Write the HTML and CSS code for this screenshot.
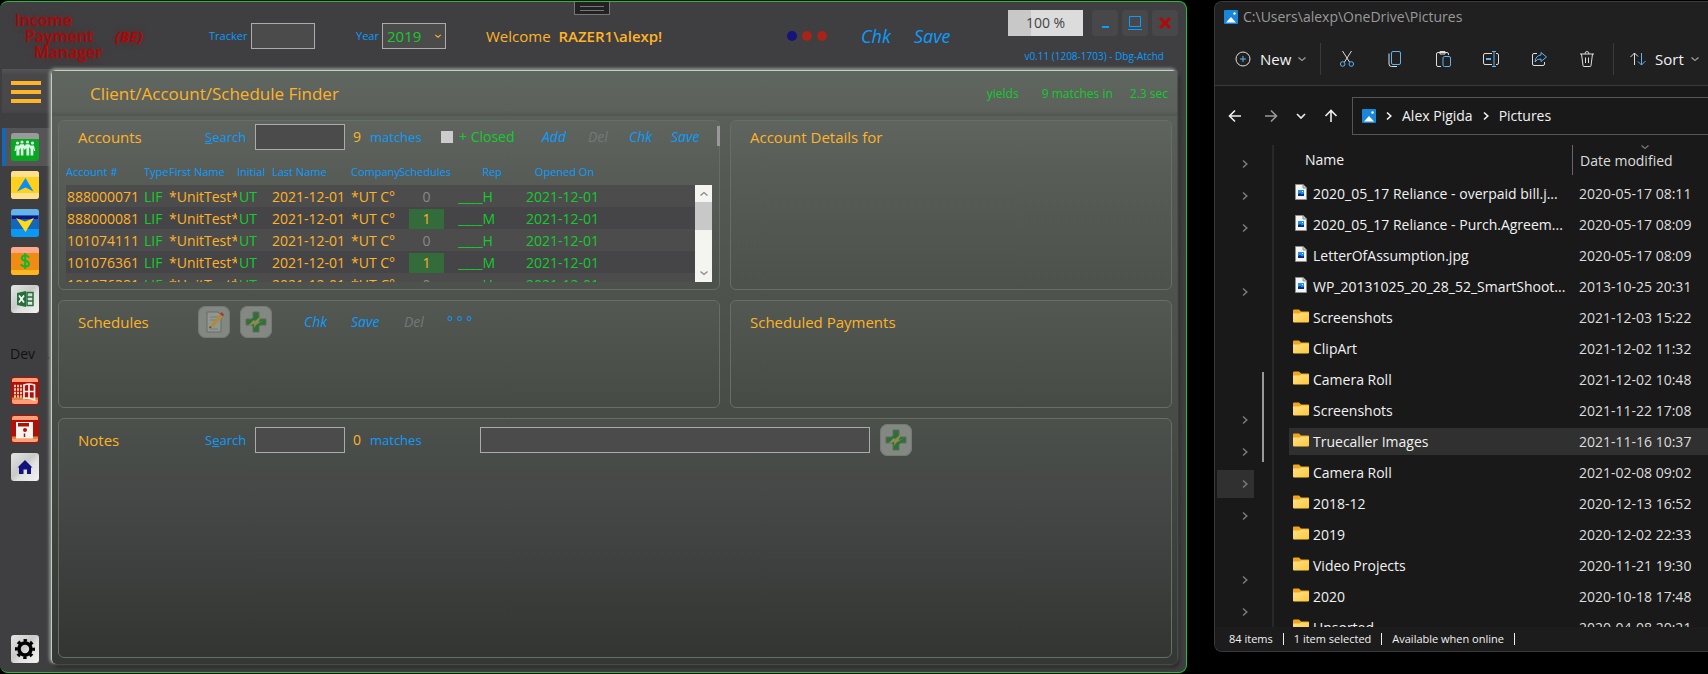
FILE: index.html
```html
<!DOCTYPE html>
<html lang="en">
<head>
<meta charset="utf-8">
<title>Income Payment Manager</title>
<link rel="stylesheet" href="styles.css">
</head>
<body>
<svg class="defs" aria-hidden="true">
  <defs>
    <linearGradient id="gFolder" x1="0" y1="0" x2="1" y2="1"><stop offset="0" stop-color="#ffe08a"/><stop offset="1" stop-color="#fdc93a"/></linearGradient>
    <linearGradient id="gSilver" x1="0" y1="0" x2="1" y2="1"><stop offset="0" stop-color="#e4e6e4"/><stop offset=".45" stop-color="#c9cbc9"/><stop offset=".6" stop-color="#e0e2e0"/><stop offset="1" stop-color="#f2f2f0"/></linearGradient>
  </defs>
  <symbol id="folder" viewBox="0 0 16 14"><path d="M0 1.500Q0 .5 1 .5H6L8 2.500H15.500Q16 2.500 16 3.500V6H0Z" fill="#f0a51e"/><path d="M0 4.500H6.500L8 3.500H16V12.500Q16 13.500 15 13.500H1Q0 13.500 0 12.500Z" fill="url(#gFolder)"/></symbol>
  <symbol id="file" viewBox="0 0 16 16"><path d="M2.500.5H10L13.500 4V15.500H2.500Z" fill="#f4f4f2" stroke="#8d8d8d"/><path d="M10 .5V4H13.500" fill="#ccc" stroke="#8d8d8d"/><rect x="5" y="6" width="6" height="6" fill="#1b8fe8"/><path d="M5 12V10L7 9L9 10.500L11 9.500V12Z" fill="#0b2a75"/><rect x="9" y="7" width="1" height="1" fill="#fff"/></symbol>
  <symbol id="pics" viewBox="0 0 14 14"><rect width="14" height="14" rx="1" fill="#1a86d9"/><path d="M2 12.500L7 7L12 12.500Z" fill="#fff"/><circle cx="10.500" cy="3.500" r="1.200" fill="#fff"/></symbol>
  <symbol id="right" viewBox="0 0 10 10"><path d="M3 1.500L6.800 5L3 8.500" fill="none" stroke="currentColor" stroke-width="1.600"/></symbol>
  <symbol id="down" viewBox="0 0 10 10"><path d="M1.500 3.500L5 6.500L8.500 3.500" fill="none" stroke="currentColor" stroke-width="1.300"/></symbol>
  <symbol id="plus" viewBox="0 0 32 32"><path d="M13 6H19V11.500L20.500 13H26V19H20.500L19 20.500V26H13V20.500L11.500 19H6V13H11.500L13 11.500Z" fill="#2e7136" stroke="#626862"/><path d="M8 20L13.500 14L15 15L22 9L18.500 16.500L24 14L16 19L14.500 22L14 18Z" fill="#8a8a55"/></symbol>
</svg>

<main class="desktop">
  <section class="ipm" aria-label="Income Payment Manager">
    <div class="grip"></div>
    <header class="ipm-head">
      <div class="logo"><span>Income</span><span>Payment</span><span>Manager</span></div>
      <b class="env">(BE)</b>
      <label class="small" for="tracker">Tracker</label>
      <input class="box" id="tracker" type="text">
      <label class="small" for="year">Year</label>
      <div class="year"><select id="year" class="box"><option>2019</option></select><svg class="ic10"><use href="#down"/></svg></div>
      <div class="welcome">Welcome <b>RAZER1\alexp!</b></div>
      <div class="dots"><i class="navy"></i><i></i><i></i></div>
      <button class="cmd big">Chk</button>
      <button class="cmd big">Save</button>
      <div class="head-right">
        <div class="caption">
          <div class="zoom">100 %</div>
          <button class="cap" aria-label="Minimize"><svg viewBox="0 0 26 26"><path d="M10 17H17" stroke="#0a9cff" stroke-width="2"/></svg></button>
          <button class="cap" aria-label="Maximize"><svg viewBox="0 0 26 26"><path d="M7.500 6.500H18.500V16.500H7.500ZM6 19.500H20" fill="none" stroke="#0a9cff"/></svg></button>
          <button class="cap" aria-label="Close"><svg viewBox="0 0 26 26"><path d="M8 8L18 18M18 8L8 18" stroke="#b30808" stroke-width="3"/></svg></button>
        </div>
        <div class="version">v0.11 (1208-1703) - Dbg-Atchd</div>
      </div>
    </header>

    <nav class="rail">
      <button class="burger" aria-label="Menu"><i></i><i></i><i></i></button>
      <button class="item on" aria-label="Clients"><svg viewBox="0 0 28 28"><rect width="28" height="28" rx="3" fill="#07a81f"/><path d="M0 6V3Q0 0 3 0H25Q28 0 28 3V6Z" fill="#9a9a9a"/><g fill="#d8f5e6"><circle cx="6.500" cy="10" r="1.600"/><circle cx="11" cy="9" r="1.600"/><circle cx="16.500" cy="9" r="1.600"/><circle cx="21.500" cy="10" r="1.600"/><path d="M4.500 12.500H8.500L9.200 11.200H12.800L13.800 13L14.800 11.200H18.300L19.300 12.500H23L24.200 18H23L22.300 15V22.500H20.800V17.500V22.500H19.600V16L18.200 14V22.500H16.800V17V22.500H15.400V15L13.800 17L12.400 15V22.500H11.200V17V22.500H9.800V15L8.400 17V22.500H7V18V22.500H5.400V16L4.600 18H3.400Z"/></g></svg></button>
      <button class="item" aria-label="Up"><svg viewBox="0 0 28 28"><rect width="28" height="28" rx="3" fill="#ffd01c"/><path d="M0 6V3Q0 0 3 0H25Q28 0 28 3V6ZM0 22H28V25Q28 28 25 28H3Q0 28 0 25Z" fill="#ffe08c"/><path d="M14.500 7L22.500 20.500L14.500 16.500L6 20.500Z" fill="#0b8ef0"/></svg></button>
      <button class="item" aria-label="Down"><svg viewBox="0 0 28 28"><rect width="28" height="28" rx="3" fill="#1565b8"/><path d="M0 6V3Q0 0 3 0H25Q28 0 28 3V6Z" fill="#66b3e8"/><path d="M1 7H27V10H1Z" fill="#14147c"/><path d="M0 20H28V25Q28 28 25 28H3Q0 28 0 25Z" fill="#0b98f2"/><path d="M5 9L14 12.500L23 9L14.500 23Z" fill="#ffd91c"/></svg></button>
      <button class="item" aria-label="Money"><svg viewBox="0 0 28 28"><rect width="28" height="28" rx="3" fill="#f08c14"/><path d="M0 6V3Q0 0 3 0H25Q28 0 28 3V6Z" fill="#ffa98a"/><path d="M0 23H28V25Q28 28 25 28H3Q0 28 0 25Z" fill="#ffb71c"/><path d="M18 10.500Q17 8.500 14.200 8.500Q10.800 8.500 10.800 11Q10.800 13.200 14.200 13.700Q18 14.300 18 17Q18 19.500 14.200 19.500Q11 19.500 10 17.200M14.200 6V22" fill="none" stroke="#12b82b" stroke-width="2"/></svg></button>
      <button class="item" aria-label="Excel"><svg viewBox="0 0 28 28"><rect width="28" height="28" rx="3" fill="url(#gSilver)"/><path d="M6 8L15 6V22L6 20Z" fill="#25703a"/><path d="M16 7.500H22V20.500H16ZM16 12H22M16 16H22" fill="none" stroke="#25703a" stroke-width="1.500"/><path d="M8 10.500L13 17.500M13 10.500L8 17.500" stroke="#fff" stroke-width="1.700"/></svg></button>
      <div class="dev"><span>Dev</span><span class="dot">.</span></div>
      <button class="item" aria-label="Window"><svg viewBox="0 0 28 28"><rect width="28" height="28" rx="3" fill="#b01008"/><path d="M1 5V3Q1 1 3 1H25Q27 1 27 3V5ZM1 23H27V25Q27 27 25 27H3Q1 27 1 25Z" fill="#ff9d75"/><path d="M1 20.500H27V23H1Z" fill="#d98a3c"/><path d="M3 9H13M3 12.500H13M3 16H13M3 19.500H13" stroke="#e8c8a8" stroke-width="2.500" stroke-dasharray="2 1"/><path d="M13 8Q18 6 23.500 8V23Q18 20.500 13 21.500ZM18 7V21M13 14.500H23" fill="none" stroke="#eee" stroke-width="1.700"/></svg></button>
      <button class="item" aria-label="Disk"><svg viewBox="0 0 28 28"><rect width="28" height="28" rx="3" fill="#b01008"/><path d="M1 5V3Q1 1 3 1H25Q27 1 27 3V5ZM1 24H27V25Q27 27 25 27H3Q1 27 1 25Z" fill="#ff9d75"/><path d="M1 21.500H27V24H1Z" fill="#d98a3c"/><path d="M5 7H22V23.500H5Z" fill="#f6f6ee"/><path d="M7 8H18V11.500H7Z" fill="#b01008"/><circle cx="14" cy="15" r="2" fill="#b01008"/><path d="M13.500 18.500V22" stroke="#b01008" stroke-width="1.500"/></svg></button>
      <button class="item" aria-label="Home"><svg viewBox="0 0 28 28"><rect width="28" height="28" rx="3" fill="url(#gSilver)"/><path d="M14 7L21.500 14.500H20V21H16V16.500H12.500V21H8V14.500H6.500Z" fill="#12127f"/></svg></button>
      <button class="item last" aria-label="Settings"><svg viewBox="0 0 28 28"><rect width="28" height="28" rx="3" fill="url(#gSilver)"/><circle cx="14" cy="14" r="6" fill="none" stroke="#000" stroke-width="3.600"/><circle cx="14" cy="14" r="8.600" fill="none" stroke="#000" stroke-width="2.800" stroke-dasharray="3.400 3.354" stroke-dashoffset="1.700"/></svg></button>
    </nav>

    <div class="page">
      <header class="page-head">
        <h1>Client/Account/Schedule Finder</h1>
        <div class="yield"><span>yields</span><span>9 matches in</span><span>2.3 sec</span></div>
      </header>
      <div class="cards">
        <section class="card">
          <i class="thumb"></i>
          <div class="bar accounts">
            <h2>Accounts</h2>
            <label for="accSearch"><u>S</u>earch</label>
            <input class="box" id="accSearch" type="text">
            <span class="num">9</span><span>matches</span>
            <input class="check" type="checkbox" id="closed"><label class="green closed" for="closed">+ Closed</label>
            <button class="cmd">Add</button><button class="cmd" disabled>Del</button><button class="cmd">Chk</button><button class="cmd">Save</button>
          </div>
          <div class="grid-area">
            <div class="scroll">
              <table>
                <colgroup><col class="c1"><col class="c2"><col class="c3"><col class="c4"><col class="c5"><col class="c6"><col class="c7"><col class="c8"><col class="c9"><col></colgroup>
                <thead><tr><th>Account #</th><th>Type</th><th>First Name</th><th>Initial</th><th>Last Name</th><th>Company</th><th>Schedules</th><th class="mid">Rep</th><th class="mid">Opened On</th><th></th></tr></thead>
                <tbody>
                  <tr><td>888000071</td><td class="green">LIF</td><td>*UnitTest*</td><td class="green">UT</td><td>2021-12-01</td><td>*UT C°</td><td><span class="cnt">0</span></td><td class="green">____H</td><td class="green">2021-12-01</td><td></td></tr>
                  <tr><td>888000081</td><td class="green">LIF</td><td>*UnitTest*</td><td class="green">UT</td><td>2021-12-01</td><td>*UT C°</td><td><span class="cnt one">1</span></td><td class="green">____M</td><td class="green">2021-12-01</td><td></td></tr>
                  <tr><td>101074111</td><td class="green">LIF</td><td>*UnitTest*</td><td class="green">UT</td><td>2021-12-01</td><td>*UT C°</td><td><span class="cnt">0</span></td><td class="green">____H</td><td class="green">2021-12-01</td><td></td></tr>
                  <tr><td>101076361</td><td class="green">LIF</td><td>*UnitTest*</td><td class="green">UT</td><td>2021-12-01</td><td>*UT C°</td><td><span class="cnt one">1</span></td><td class="green">____M</td><td class="green">2021-12-01</td><td></td></tr>
                  <tr><td>101076381</td><td class="green">LIF</td><td>*UnitTest*</td><td class="green">UT</td><td>2021-12-01</td><td>*UT C°</td><td><span class="cnt">0</span></td><td class="green">____H</td><td class="green">2021-12-01</td><td></td></tr>
                </tbody>
              </table>
            </div>
            <div class="sbar"><svg class="ic10 up"><use href="#down"/></svg><i></i><svg class="ic10"><use href="#down"/></svg></div>
          </div>
        </section>
        <section class="card"><div class="bar side"><h2>Account Details for</h2></div></section>

        <section class="card">
          <div class="bar schedules">
            <h2>Schedules</h2>
            <button class="tile" aria-label="Edit schedule"><svg viewBox="0 0 32 32"><path d="M9 6H20L23 9V26H9Z" fill="#92978f" stroke="#686d68"/><path d="M12 11H20M12 14H20M12 23H20" stroke="#777c77"/><path d="M12 20L22 8L25 10.500L15 21L11 22.500Z" fill="#b28a3e"/><path d="M22 8L23.500 6L26 8.500L25 10.500Z" fill="#a03a34"/><path d="M11 22.500L12 20L13.500 21.500Z" fill="#444"/></svg></button>
            <button class="tile" aria-label="Add schedule"><svg viewBox="0 0 32 32"><use href="#plus"/></svg></button>
            <button class="cmd">Chk</button><button class="cmd">Save</button><button class="cmd" disabled>Del</button><button class="cmd">° ° °</button>
          </div>
        </section>
        <section class="card"><div class="bar side tall"><h2>Scheduled Payments</h2></div></section>

        <section class="card wide">
          <div class="bar notes">
            <h2>Notes</h2>
            <label for="noteSearch">S<u>e</u>arch</label>
            <input class="box" id="noteSearch" type="text">
            <span class="num">0</span><span>matches</span>
            <input class="box" type="text" aria-label="New note">
            <button class="tile" aria-label="Add note"><svg viewBox="0 0 32 32"><use href="#plus"/></svg></button>
          </div>
        </section>
      </div>
    </div>
  </section>

  <section class="explorer" aria-label="Pictures">
    <header class="ex-title"><svg class="ic14"><use href="#pics"/></svg><span>C:\Users\alexp\OneDrive\Pictures</span></header>
    <div class="ex-tools">
      <button class="tool new"><svg viewBox="0 0 16 16"><circle cx="8" cy="8" r="7" class="w"/><path d="M8 5V11M5 8H11" class="b"/></svg><span>New</span><svg class="ic10"><use href="#down"/></svg></button>
      <button class="tool" aria-label="Cut"><svg viewBox="0 0 16 16"><path d="M3.500 0L10.500 11M12.500 0L5.500 11" class="w"/><circle cx="3.700" cy="13" r="2.300" class="b"/><circle cx="12.300" cy="13" r="2.300" class="b"/></svg></button>
      <button class="tool" aria-label="Copy"><svg viewBox="0 0 16 16"><path d="M2 2.500V13Q2 15.500 4.500 15.500H10" class="w"/><rect x="4.500" y=".5" width="9" height="13" rx="1.500" class="b"/></svg></button>
      <button class="tool" aria-label="Paste"><svg viewBox="0 0 16 16"><path d="M6 15.500H3Q1.500 15.500 1.500 14V3Q1.500 1.500 3 1.500H12Q13.500 1.500 13.500 3V4M5 .5H10V3H5Z" class="w"/><rect x="8" y="5.500" width="7.500" height="10" rx="1.500" class="b"/></svg></button>
      <button class="tool" aria-label="Rename"><svg viewBox="0 0 16 16"><path d="M9 2.500H2Q.5 2.500 .5 4V12Q.5 13.500 2 13.500H9M13 2.500H14Q15.500 2.500 15.500 4V12Q15.500 13.500 14 13.500H13" class="w"/><path d="M11 .5V15.500M9 .5H13M9 15.500H13" class="b"/><path d="M3 8H8" class="b thick"/></svg></button>
      <button class="tool" aria-label="Share"><svg viewBox="0 0 16 16"><path d="M6 2.500H3Q1.500 2.500 1.500 4V13Q1.500 14.500 3 14.500H12Q13.500 14.500 13.500 13V11" class="w"/><path d="M10 1.500L15.500 6L10 10.500V8Q6 7.500 4 11Q4.500 4.500 10 4Z" class="b"/></svg></button>
      <button class="tool" aria-label="Delete"><svg viewBox="0 0 16 16"><path d="M1 3H15M2.500 3L4 14.500Q4 15.500 5 15.500H11Q12 15.500 12 14.500L13.500 3M6 3Q6 .5 8 .5Q10 .5 10 3M6.500 6.500V12M9.500 6.500V12" class="w"/></svg></button>
      <button class="tool sort"><svg viewBox="0 0 16 16"><path d="M4.500 14V2M.5 6L4.500 2L8 5.500" class="w"/><path d="M11.500 2V14M8 10.500L11.500 14L15.500 10" class="b"/></svg><span>Sort</span><svg class="ic10"><use href="#down"/></svg></button>
    </div>
    <div class="ex-nav">
      <button aria-label="Back"><svg viewBox="0 0 14 14"><path d="M13 7H1.500M7 1.500L1.500 7L7 12.500"/></svg></button>
      <button class="dim" aria-label="Forward"><svg viewBox="0 0 14 14"><path d="M1 7H12.500M7 1.500L12.500 7L7 12.500"/></svg></button>
      <button aria-label="Recent"><svg viewBox="0 0 14 14"><path d="M3 5L7 9L11 5"/></svg></button>
      <button aria-label="Up"><svg viewBox="0 0 14 14"><path d="M7 13V1.500M1.500 7L7 1.500L12.500 7"/></svg></button>
      <div class="path"><svg class="ic14"><use href="#pics"/></svg><svg class="ic10"><use href="#right"/></svg><a href="#">Alex Pigida</a><svg class="ic10"><use href="#right"/></svg><a href="#">Pictures</a></div>
    </div>
    <div class="ex-body">
      <div class="tree">
        <i><svg class="ic10"><use href="#right"/></svg></i><i><svg class="ic10"><use href="#right"/></svg></i><i><svg class="ic10"><use href="#right"/></svg></i><i></i>
        <i><svg class="ic10"><use href="#right"/></svg></i><i></i><i></i><i></i>
        <i><svg class="ic10"><use href="#right"/></svg></i><i><svg class="ic10"><use href="#right"/></svg></i><i class="sel"><svg class="ic10"><use href="#right"/></svg></i><i><svg class="ic10"><use href="#right"/></svg></i><i></i>
        <i><svg class="ic10"><use href="#right"/></svg></i><i><svg class="ic10"><use href="#right"/></svg></i>
      </div>
      <div class="tree-bar"><i></i></div>
      <div class="files">
        <div class="frow fhead"><span>Name</span><span class="date">Date modified<svg class="ic10 mark"><use href="#down"/></svg></span></div>
        <div class="frow"><svg class="ic16"><use href="#file"/></svg><span>2020_05_17 Reliance - overpaid bill.j...</span><span class="date">2020-05-17 08:11</span></div>
        <div class="frow"><svg class="ic16"><use href="#file"/></svg><span>2020_05_17 Reliance - Purch.Agreem...</span><span class="date">2020-05-17 08:09</span></div>
        <div class="frow"><svg class="ic16"><use href="#file"/></svg><span>LetterOfAssumption.jpg</span><span class="date">2020-05-17 08:09</span></div>
        <div class="frow"><svg class="ic16"><use href="#file"/></svg><span>WP_20131025_20_28_52_SmartShoot...</span><span class="date">2013-10-25 20:31</span></div>
        <div class="frow"><svg class="ic16"><use href="#folder"/></svg><span>Screenshots</span><span class="date">2021-12-03 15:22</span></div>
        <div class="frow"><svg class="ic16"><use href="#folder"/></svg><span>ClipArt</span><span class="date">2021-12-02 11:32</span></div>
        <div class="frow"><svg class="ic16"><use href="#folder"/></svg><span>Camera Roll</span><span class="date">2021-12-02 10:48</span></div>
        <div class="frow"><svg class="ic16"><use href="#folder"/></svg><span>Screenshots</span><span class="date">2021-11-22 17:08</span></div>
        <div class="frow sel"><svg class="ic16"><use href="#folder"/></svg><span>Truecaller Images</span><span class="date">2021-11-16 10:37</span></div>
        <div class="frow"><svg class="ic16"><use href="#folder"/></svg><span>Camera Roll</span><span class="date">2021-02-08 09:02</span></div>
        <div class="frow"><svg class="ic16"><use href="#folder"/></svg><span>2018-12</span><span class="date">2020-12-13 16:52</span></div>
        <div class="frow"><svg class="ic16"><use href="#folder"/></svg><span>2019</span><span class="date">2020-12-02 22:33</span></div>
        <div class="frow"><svg class="ic16"><use href="#folder"/></svg><span>Video Projects</span><span class="date">2020-11-21 19:30</span></div>
        <div class="frow"><svg class="ic16"><use href="#folder"/></svg><span>2020</span><span class="date">2020-10-18 17:48</span></div>
        <div class="frow"><svg class="ic16"><use href="#folder"/></svg><span>Unsorted</span><span class="date">2020-04-08 20:21</span></div>
      </div>
    </div>
    <footer class="ex-foot"><span>84 items</span><span>1 item selected</span><span>Available when online</span></footer>
  </section>
</main>
</body>
</html>
```

FILE: styles.css
```css
* { box-sizing: border-box; }
html, body { height: 100%; }
body { margin: 0; background: #000; font: 14px/20px "Open Sans", "Noto Sans", sans-serif; overflow: hidden; }
h1, h2 { margin: 0; font-weight: 400; }
button { padding: 0; border: 0; background: none; font: inherit; color: inherit; text-align: left; white-space: nowrap; }
a { color: inherit; text-decoration: none; }
svg { display: block; flex: none; }
.defs { position: absolute; width: 0; height: 0; }
.ic10 { width: 10px; height: 10px; }
.ic14 { width: 14px; height: 14px; }
.ic16 { width: 16px; height: 16px; }
.green { color: #12cc2b; }

.desktop { display: grid; grid-template-columns: minmax(0, 1187fr) minmax(0, 494fr); gap: 27px; height: 100%; padding-top: 1px; }

/* Payment manager window */
.ipm { position: relative; display: grid; grid-template: 67px minmax(0, 1fr) / 51px minmax(0, 1fr); margin-bottom: 1px; border: 1px solid #17c42e; border-left: 0; border-radius: 8px; background: #3f3f41; color: #0a9cff; overflow: hidden; }
.grip { position: absolute; left: 574px; top: 0; width: 36px; height: 13px; background: #222; border: 1px solid #777; border-top: 0; }
.grip::after { content: ""; display: block; width: 24px; height: 3px; margin: 4px auto; border: solid #777; border-width: 1px 0; }
.ipm-head { grid-column: 1 / -1; display: grid; grid-template-columns: 100px 94px 42px 105px 26px 104px 301px 74px 53px 60px minmax(0, 1fr); align-items: center; padding-left: 15px; }
.logo { display: grid; color: #a90808; font-size: 16px; line-height: 16px; font-weight: 600; text-shadow: 0 0 6px rgba(170, 10, 10, .5); }
.logo span:nth-child(2) { padding-left: 10px; }
.logo span:nth-child(3) { padding-left: 19px; }
.env { color: #a90808; font-size: 15px; font-style: italic; text-shadow: 0 0 6px rgba(170, 10, 10, .5); }
.small { font-size: 11px; line-height: 16px; }
.box { width: 90px; height: 26px; padding: 0 4px; margin: 0; background: #4c4b4c; border: 1px solid #ababab; border-radius: 0; color: #12cc2b; font: inherit; }
#tracker, #year { width: 64px; }
#year { appearance: none; font-size: 15px; }
.year { display: grid; grid-template-columns: 64px; align-items: center; color: #ffb327; }
.year > * { grid-area: 1 / 1; }
.year svg { justify-self: end; margin-right: 4px; width: 8px; }
.welcome { color: #ffb327; font-size: 15px; }
.welcome b { margin-left: 4px; font-weight: 600; }
.dots { display: flex; gap: 5px; }
.dots i { width: 10px; height: 10px; border-radius: 50%; background: #a62418; }
.dots .navy { background: #14147c; }
.cmd { color: #0a9cff; font-size: 14px; font-style: italic; }
.cmd:disabled { color: #777; }
.cmd.big { font-size: 18px; }
.head-right { align-self: start; padding: 8px 8px 0 0; }
.caption { display: flex; justify-content: flex-end; gap: 4px; }
.zoom { width: 75px; height: 26px; margin-right: 5px; background: linear-gradient(90deg, #c8c8c8 23px, #dcdcdc 23px); color: #444; line-height: 26px; text-align: center; }
.cap { width: 26px; height: 26px; border-radius: 4px; background: #48484a; }
.version { margin-top: 12px; padding-right: 14px; font-size: 10px; line-height: 16px; text-align: right; white-space: nowrap; }

.rail { display: flex; flex-direction: column; align-items: stretch; padding: 0 0 4px 2px; }
.burger { display: grid; align-content: center; gap: 5px; height: 46px; margin-bottom: 13px; padding-left: 9px; background: linear-gradient(#555557, #48484a 6px, #48484a 42px, #3c3c3e); }
.burger i { width: 30px; height: 4px; background: #ffb327; }
.item { height: 38px; padding: 5px 9px; }
.item svg { width: 28px; height: 28px; }
.item.on { background: #555557; box-shadow: inset 4px 0 #1565b8; }
.item.last { margin-top: auto; }
.dev { display: flex; justify-content: space-between; align-items: center; height: 54px; padding: 18px 0 0 8px; color: #111; font-size: 14px; }

.page { display: flex; flex-direction: column; margin: 1px 9px 8px 0; border-top: 1px solid #c4ccc4; border-left: 1px solid #c4ccc4; border-radius: 5px; background: linear-gradient(#5e645e, #545954 18%, #484d48 55%, #343834); box-shadow: -1px -1px 3px 1px #8b908b, 2px 3px 4px #222; }
.page-head { display: flex; justify-content: space-between; align-items: center; height: 45px; padding: 2px 9px 0 38px; border-bottom: 1px solid #525752; background: linear-gradient(#5f655f, #5c615c 90%, #525752); }
h1 { color: #ffb327; font-size: 17px; }
.yield { display: flex; color: #12cc2b; font-size: 12px; gap: 17px; }
.yield span:nth-child(2) { padding-left: 6px; }
.cards { flex: 1; display: grid; grid-template-columns: 662fr 442fr; grid-template-rows: 170px 108px minmax(0, 1fr); gap: 10px; padding: 4px 5px 6px 6px; }
.card { position: relative; min-width: 0; padding: 2px 7px 6px 7px; border: 1px solid #686d68; border-radius: 6px; background: linear-gradient(rgba(255,255,255,.03), rgba(0,0,0,.02)); }
.wide { grid-column: 1 / -1; background: linear-gradient(#4c504b, #434645 40%, #323531); }
.thumb { position: absolute; right: -1px; top: 5px; width: 3px; height: 20px; background: #999; }
.bar { display: grid; align-items: center; padding-left: 12px; font-size: 13px; }
h2 { color: #ffb327; font-size: 15px; white-space: nowrap; }
.num { color: #ffb327; font-size: 14px; }
.accounts { height: 28px; grid-template-columns: 127px 50px 98px 17px 71px 18px 83px 46px 41px 42px minmax(0, 1fr); }
.schedules { height: 38px; grid-template-columns: 120px 42px 64px 47px 53px 43px minmax(0, 1fr); }
.notes { height: 38px; grid-template-columns: 127px 50px 98px 17px 110px minmax(0, 400px) 32px; }
.notes .box:nth-of-type(2) { width: calc(100% - 10px); }
.side { height: 28px; }
.side.tall { height: 38px; }
.check { appearance: none; width: 12px; height: 12px; margin: 0; background: #ccc; }
.closed { font-size: 14px; }
.tile { width: 32px; height: 32px; border-radius: 8px; background: #838883; box-shadow: inset 0 0 0 1px #757a75; }

.grid-area { display: grid; grid-template-columns: minmax(0, 1fr) 17px; padding-top: 10px; }
.scroll { height: 121px; overflow: hidden; }
table { width: 100%; table-layout: fixed; border-collapse: collapse; color: #ffb327; }
th, td { height: 22px; padding: 0; line-height: 20px; overflow: hidden; white-space: nowrap; text-align: left; }
td { padding-top: 2px; }
td:first-child { padding-left: 1px; }
td:nth-child(4) { padding-left: 2px; }
th { height: 24px; padding-bottom: 2px; color: #0a9cff; font-size: 11px; font-weight: 400; }
th.mid { text-align: center; }
tbody tr { background: #4c4c4c; }
tbody tr:nth-child(even) { background: #454547; }
.c1 { width: 78px; } .c2 { width: 25px; } .c3 { width: 68px; } .c4 { width: 35px; } .c5 { width: 79px; } .c6 { width: 48px; } .c7 { width: 59px; } .c8 { width: 68px; } .c9 { width: 77px; }
.cnt { display: block; width: 35px; margin-left: 10px; text-align: center; color: #888; }
.one { background: #336b3a; color: #ffb327; }
.sbar { display: flex; flex-direction: column; align-items: center; height: 97px; margin-top: 24px; padding: 4px 0; background: #f4f5f1; color: #888; }
.sbar i { width: 17px; height: 28px; margin: 3px 0 auto; background: #c8c8c8; }
.up { transform: rotate(180deg); }

/* File explorer window */
.explorer { display: flex; flex-direction: column; height: 651px; border: 1px solid #3a3a3a; border-right: 0; border-radius: 8px 0 0 8px; background: #191919; color: #f2f2f2; overflow: hidden; white-space: nowrap; }
.ex-title { display: flex; align-items: center; gap: 5px; height: 30px; padding: 0 9px; background: #202020; color: #9a9a9a; }
.ex-tools { display: flex; align-items: center; height: 54px; padding-left: 20px; background: #202020; border-bottom: 1px solid #3a3a3a; }
.tool { flex: none; width: 48px; height: 32px; display: flex; align-items: center; justify-content: center; }
.tool > svg:first-child { width: 16px; height: 16px; }
.w, .b { fill: none; stroke: #ddd; }
.b { stroke: #5fb2f2; }
.thick { stroke-width: 2; }
.new, .sort { width: auto; gap: 9px; justify-content: flex-start; font-size: 15px; }
.tool .ic10 { margin-left: -3px; color: #999; }
.new { width: 86px; margin-right: 2px; border-right: 1px solid #3a3a3a; }
.sort { margin-left: 2px; padding-left: 16px; border-left: 1px solid #3a3a3a; }
.ex-nav { display: flex; align-items: center; height: 59px; padding: 0 0 0 5px; }
.ex-nav button { flex: none; width: 30px; height: 32px; display: grid; place-items: center; }
.ex-nav button svg { width: 14px; height: 14px; fill: none; stroke: #eee; stroke-width: 1.600; }
.ex-nav .dim { opacity: .6; margin-left: 6px; }
.ex-nav button:nth-child(4) { margin-right: 6px; }
.path { flex: 1; display: flex; align-items: center; gap: 8px; height: 38px; padding-left: 9px; border: 1px solid #555; border-right: 0; }
.ex-body { flex: 1; min-height: 0; display: grid; grid-template-columns: 37px 18px minmax(0, 1fr); padding-left: 2px; overflow: hidden; }
.tree { display: flex; flex-direction: column; gap: 4px; color: #777; overflow: hidden; padding-top: 5px; }
.tree i { flex: none; display: flex; align-items: center; justify-content: flex-end; height: 28px; padding-right: 4px; }
.tree .sel { background: #2f302f; }
.tree-bar { padding: 227px 0 0 8px; }
.tree-bar i { display: block; width: 2px; height: 90px; background: #999; }
.files { border-left: 2px solid #282828; padding-left: 15px; overflow: hidden; }
.frow { display: grid; grid-template-columns: 20px 266px minmax(0, 1fr); align-items: center; height: 27px; margin-bottom: 4px; padding-left: 4px; }
.frow .ic16 { margin-bottom: 4px; }
.frow.sel { background: #2f302f; }
.date { color: #ddd; }
.fhead { grid-template-columns: 267px minmax(0, 1fr); height: 30px; padding-left: 16px; margin-bottom: 5px; }
.fhead .date { position: relative; height: 30px; padding-left: 7px; line-height: 32px; border-left: 1px solid #666; }
.mark { position: absolute; left: 67px; top: -3px; color: #777; }
.ex-foot { display: flex; align-items: center; height: 24px; padding-left: 14px; background: #1c1c1c; font-size: 11px; line-height: 12px; }
.ex-foot span { padding-right: 10px; margin-right: 10px; border-right: 1px solid #eee; }
```
